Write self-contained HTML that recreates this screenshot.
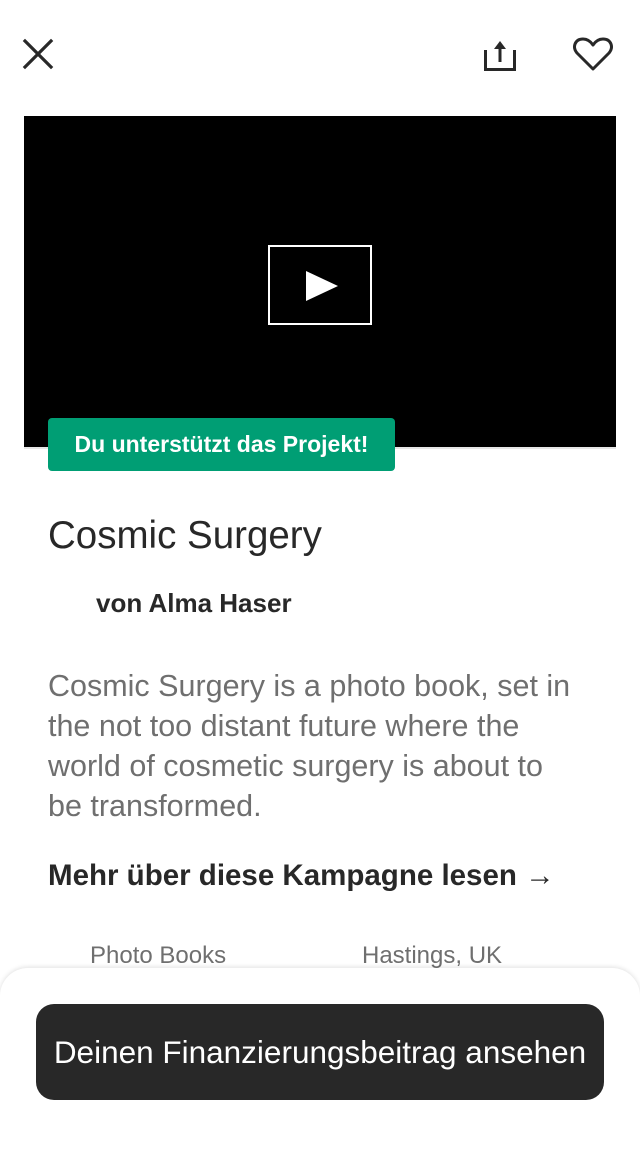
<!DOCTYPE html>
<html><head><meta charset="utf-8"><style>
*{margin:0;padding:0;box-sizing:border-box}
body{width:640px;height:1136px;background:#fff;font-family:"Liberation Sans",sans-serif;position:relative;overflow:hidden;color:#282828}
.a{position:absolute;white-space:nowrap}
</style></head><body>
<svg class="a" style="left:22px;top:38px" width="32" height="32" viewBox="0 0 32 32"><path d="M3 3L29 29M29 3L3 29" stroke="#282828" stroke-width="3.2" stroke-linecap="square"/></svg>
<svg class="a" style="left:482px;top:36px" width="36" height="36" viewBox="0 0 36 36"><path d="M3.5 14V33.5H32.5V14" fill="none" stroke="#282828" stroke-width="3"/><path d="M18 26V12" stroke="#282828" stroke-width="3"/><path d="M12 13L18 5L24 13Z" fill="#282828"/></svg>
<svg class="a" style="left:572px;top:36px" width="42" height="36" viewBox="0 0 42 36"><path d="M21 33L5 17C0 11 3 3 11 3C16 3 19 6 21 9C23 6 26 3 31 3C39 3 42 11 37 17Z" fill="none" stroke="#282828" stroke-width="3" stroke-linejoin="round"/></svg>
<div class="a" style="left:24px;top:116px;width:592px;height:333px;background:#000;border-bottom:2px solid #e6e6e6"></div>
<div class="a" style="left:268px;top:245px;width:104px;height:80px;border:2px solid #fff"></div>
<svg class="a" style="left:305px;top:270px" width="34" height="32" viewBox="0 0 34 32"><path d="M1 1L33 16L1 31Z" fill="#fff"/></svg>
<div class="a" style="left:48px;top:418px;width:347px;height:53px;background:#009e74;border-radius:4px;color:#fff;font-weight:bold;font-size:23px;line-height:53px;text-align:center">Du unterstützt das Projekt!</div>
<div class="a" style="left:48px;top:514px;font-size:38.5px;color:#282828">Cosmic Surgery</div>
<div class="a" style="left:96px;top:588px;font-size:26px;font-weight:bold;color:#282828">von Alma Haser</div>
<div class="a" style="left:48px;top:666px;font-size:30.5px;line-height:40px;color:#6f6f6f">Cosmic Surgery is a photo book, set in<br>the not too distant future where the<br>world of cosmetic surgery is about to<br>be transformed.</div>
<div class="a" style="left:48px;top:859px;font-size:29.5px;font-weight:bold;color:#282828">Mehr über diese Kampagne lesen &#8594;</div>
<div class="a" style="left:90px;top:942px;font-size:24px;color:#6f6f6f">Photo Books</div>
<div class="a" style="left:362px;top:942px;font-size:24px;color:#6f6f6f">Hastings, UK</div>
<div class="a" style="left:0;top:968px;width:640px;height:190px;background:#fff;border-radius:28px 28px 0 0;box-shadow:0 -1px 5px rgba(0,0,0,.12)"></div>
<div class="a" style="left:36px;top:1004px;width:568px;height:96px;background:#282828;border-radius:18px;color:#fff;font-size:31.5px;line-height:96px;text-align:center">Deinen Finanzierungsbeitrag ansehen</div>
</body></html>
